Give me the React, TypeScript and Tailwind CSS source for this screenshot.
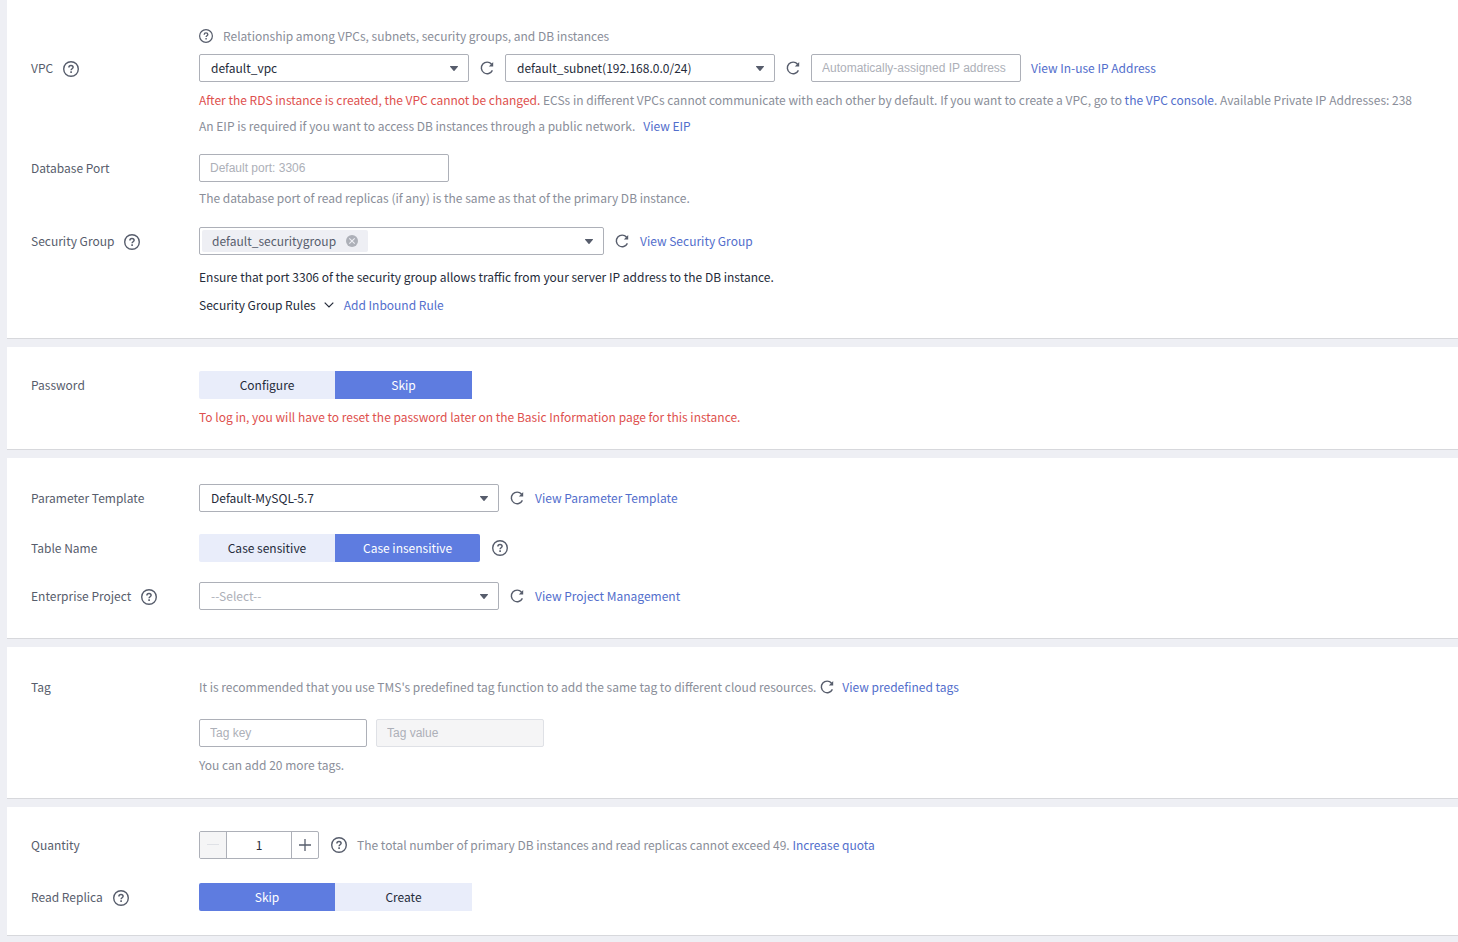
import React, { useState } from "react";
import clsx from "clsx";

const linkClass = "text-[#526ecc] hover:underline";
const hintClass = "leading-5 text-[#8a8e99]";
const inputClass =
  "h-7 rounded-xs border border-[#adb0b8] bg-white px-2.5 font-['Liberation_Sans',sans-serif] outline-none placeholder:text-[#adb0b8] focus:border-[#5e7ce0]";

const HelpIcon = ({ size = 16 }: { size?: number }) => (
  <svg
    width={size}
    height={size}
    viewBox="0 0 16 16"
    fill="none"
    stroke="#575d6c"
    className="shrink-0"
    aria-hidden="true"
  >
    <circle cx="8" cy="8" r="7.3" strokeWidth="1.4" />
    <path
      d="M5.9 6.5c0-1.3 1-2 2.1-2s2.1.7 2.1 1.8c0 1.4-2 1.5-2 2.9"
      strokeWidth="1.5"
    />
    <path d="M8.1 10.3v1.6" strokeWidth="1.6" />
  </svg>
);

const CaretIcon = () => (
  <svg width="8" height="5" viewBox="0 0 8 5" fill="#575d6c" aria-hidden="true">
    <path d="M0.4 0h7.2a.4.4 0 0 1 .3.7L4.5 4.7a.7.7 0 0 1-1 0L.1.7A.4.4 0 0 1 .4 0z" />
  </svg>
);

const RefreshButton = ({ label }: { label: string }) => (
  <button type="button" aria-label={label} className="shrink-0 cursor-pointer">
    <svg width="14" height="14" viewBox="0 0 14 14" fill="none">
      <path
        d="M12.4 9.4A5.8 5.8 0 1 1 11.6 3.2"
        stroke="#575d6c"
        strokeWidth="1.4"
      />
      <path d="M13.2 1v4.4H8.8z" fill="#575d6c" />
    </svg>
  </button>
);

interface SelectProps {
  id: string;
  label?: string;
  options: string[];
  className: string;
  muted?: boolean;
}

const Select: React.FC<SelectProps> = ({
  id,
  label,
  options,
  className,
  muted,
}) => (
  <div className={clsx("relative", className)}>
    <select
      id={id}
      aria-label={label}
      className={clsx(
        "h-7 w-full appearance-none rounded-xs border border-[#adb0b8] bg-white pr-7 pl-[11px] outline-none focus:border-[#5e7ce0]",
        muted ? "text-[#adb0b8]" : "text-[#252b3a]"
      )}
    >
      {options.map((option) => (
        <option key={option}>{option}</option>
      ))}
    </select>
    <span className="pointer-events-none absolute inset-y-0 right-[11px] flex items-center">
      <CaretIcon />
    </span>
  </div>
);

interface ToggleProps {
  label: string;
  options: string[];
  initial: string;
}

const Toggle: React.FC<ToggleProps> = ({ label, options, initial }) => {
  const [selected, setSelected] = useState(initial);

  return (
    <div
      role="group"
      aria-label={label}
      className="flex overflow-hidden rounded-xs"
    >
      {options.map((option) => (
        <button
          key={option}
          type="button"
          aria-pressed={option === selected}
          onClick={() => setSelected(option)}
          className={clsx(
            "h-7 min-w-34 cursor-pointer px-7 last:min-w-[137px]",
            option === selected
              ? "bg-[#5e7ce0] text-white"
              : "bg-[#e9edfa] text-[#252b3a]"
          )}
        >
          {option}
        </button>
      ))}
    </div>
  );
};

interface RowProps {
  label: string;
  htmlFor?: string;
  help?: boolean;
  className?: string;
  labelClassName?: string;
  children: React.ReactNode;
}

const Row: React.FC<RowProps> = ({
  label,
  htmlFor,
  help,
  className,
  labelClassName,
  children,
}) => (
  <div className={clsx("flex", className)}>
    <div
      className={clsx(
        "flex w-42 shrink-0 items-start gap-2.5 leading-7 text-[#575d6c]",
        labelClassName
      )}
    >
      {htmlFor ? <label htmlFor={htmlFor}>{label}</label> : <span>{label}</span>}
      {help && (
        <span className="flex h-7 items-center pt-0.5">
          <HelpIcon />
        </span>
      )}
    </div>
    <div className="min-w-0 flex-1">{children}</div>
  </div>
);

const Section = ({
  className,
  children,
}: {
  className: string;
  children: React.ReactNode;
}) => (
  <section
    className={clsx("border-b border-[#d7d8dc] bg-white px-6", className)}
  >
    {children}
  </section>
);

const QuantityStepper = () => {
  const [quantity, setQuantity] = useState(1);

  return (
    <div className="flex h-7 w-30 overflow-hidden rounded-xs border border-[#adb0b8]">
      <button
        type="button"
        aria-label="Decrease quantity"
        disabled={quantity <= 1}
        onClick={() => setQuantity(quantity - 1)}
        className="flex w-[27px] items-center justify-center border-r border-[#adb0b8] bg-white text-[#575d6c] disabled:bg-[#f5f5f6] disabled:text-[#dfe1e6]"
      >
        <svg width="12" height="12" viewBox="0 0 12 12" stroke="currentColor">
          <path d="M0 5.5h12" />
        </svg>
      </button>
      <input
        id="quantity"
        value={quantity}
        onChange={(e) => setQuantity(Number(e.target.value) || 1)}
        className="min-w-0 flex-1 text-center text-[#252b3a] outline-none"
      />
      <button
        type="button"
        aria-label="Increase quantity"
        onClick={() => setQuantity(quantity + 1)}
        className="flex w-[27px] cursor-pointer items-center justify-center border-l border-[#adb0b8] text-[#575d6c]"
      >
        <svg width="12" height="12" viewBox="0 0 12 12" stroke="currentColor">
          <path d="M0 6h12M6 0v12" strokeWidth="1.3" />
        </svg>
      </button>
    </div>
  );
};

const App: React.FC = () => {
  return (
    <main className="flex min-h-screen flex-col gap-2 bg-[#eeeff4] pl-[7px] font-['Noto_Sans_CJK_SC',sans-serif] text-xs">
      <Section className="pt-[26px] pb-[23px]">
        <Row label="VPC" htmlFor="vpc" help labelClassName="pt-7">
          <p className={clsx("mb-2 flex items-center gap-2.5", hintClass)}>
            <HelpIcon size={14} />
            Relationship among VPCs, subnets, security groups, and DB instances
          </p>
          <div className="flex items-center">
            <Select
              id="vpc"
              options={["default_vpc"]}
              className="mr-[11px] w-[270px]"
            />
            <RefreshButton label="Refresh VPCs" />
            <Select
              id="subnet"
              label="Subnet"
              options={["default_subnet(192.168.0.0/24)"]}
              className="mx-[11px] w-[270px]"
            />
            <RefreshButton label="Refresh subnets" />
            <input
              aria-label="IP address"
              placeholder="Automatically-assigned IP address"
              className={clsx("mr-2.5 ml-[11px] w-[210px]", inputClass)}
            />
            <a href="#in-use-ip" className={linkClass}>
              View In-use IP Address
            </a>
          </div>
          <p className={clsx("mt-2", hintClass)}>
            <span className="text-[#de504e]">
              After the RDS instance is created, the VPC cannot be changed.
            </span>{" "}
            ECSs in different VPCs cannot communicate with each other by default.
            If you want to create a VPC, go to{" "}
            <a href="#vpc-console" className={linkClass}>
              the VPC console
            </a>
            . Available Private IP Addresses: 238
          </p>
          <p className={clsx("mt-1.5", hintClass)}>
            An EIP is required if you want to access DB instances through a
            public network.
            <a href="#eip" className={clsx("ml-2", linkClass)}>
              View EIP
            </a>
          </p>
        </Row>

        <Row label="Database Port" htmlFor="port" className="mt-[18px]">
          <input
            id="port"
            placeholder="Default port: 3306"
            className={clsx("block w-[250px]", inputClass)}
          />
          <p className={clsx("mt-1.5", hintClass)}>
            The database port of read replicas (if any) is the same as that of
            the primary DB instance.
          </p>
        </Row>

        <Row label="Security Group" help className="mt-[19px]">
          <div className="flex items-center">
            <div className="mr-[11px] flex h-7 w-[405px] items-center rounded-xs border border-[#adb0b8] pl-0.5">
              <span className="flex h-[22px] items-center gap-2.5 rounded-xs bg-[#eeeff4] px-2.5 text-[#575d6c]">
                default_securitygroup
                <button
                  type="button"
                  aria-label="Remove default_securitygroup"
                  className="cursor-pointer"
                >
                  <svg width="12" height="12" viewBox="0 0 12 12">
                    <circle cx="6" cy="6" r="6" fill="#adb0b8" />
                    <path
                      d="M3.3 3.3l5.4 5.4M8.7 3.3L3.3 8.7"
                      stroke="#eeeff4"
                      strokeWidth="1.1"
                    />
                  </svg>
                </button>
              </span>
              <button
                type="button"
                aria-label="Choose security groups"
                className="flex h-full flex-1 cursor-pointer items-center justify-end pr-2.5"
              >
                <CaretIcon />
              </button>
            </div>
            <RefreshButton label="Refresh security groups" />
            <a href="#security-group" className={clsx("ml-[11px]", linkClass)}>
              View Security Group
            </a>
          </div>
          <p className="mt-3 leading-5 text-[#252b3a]">
            Ensure that port 3306 of the security group allows traffic from your
            server IP address to the DB instance.
          </p>
          <div className="mt-2 flex items-center gap-2.5 leading-5">
            <button
              type="button"
              className="flex cursor-pointer items-center gap-2 text-[#252b3a]"
            >
              Security Group Rules
              <svg
                width="10"
                height="6"
                viewBox="0 0 10 6"
                fill="none"
                stroke="#252b3a"
                strokeWidth="1.2"
              >
                <path d="M0.7 0.7L5 5L9.3 0.7" />
              </svg>
            </button>
            <a href="#inbound-rule" className={linkClass}>
              Add Inbound Rule
            </a>
          </div>
        </Row>
      </Section>

      <Section className="pt-6 pb-[22px]">
        <Row label="Password">
          <Toggle label="Password" options={["Configure", "Skip"]} initial="Skip" />
          <p className="mt-2 leading-5 text-[#de504e]">
            To log in, you will have to reset the password later on the Basic
            Information page for this instance.
          </p>
        </Row>
      </Section>

      <Section className="pt-[26px] pb-7">
        <Row label="Parameter Template" htmlFor="template">
          <div className="flex items-center">
            <Select
              id="template"
              options={["Default-MySQL-5.7"]}
              className="mr-[11px] w-[300px]"
            />
            <RefreshButton label="Refresh parameter templates" />
            <a
              href="#parameter-template"
              className={clsx("ml-[11px]", linkClass)}
            >
              View Parameter Template
            </a>
          </div>
        </Row>
        <Row label="Table Name" className="mt-[22px]">
          <div className="flex items-center gap-3">
            <Toggle
              label="Table Name"
              options={["Case sensitive", "Case insensitive"]}
              initial="Case insensitive"
            />
            <HelpIcon />
          </div>
        </Row>
        <Row label="Enterprise Project" htmlFor="project" help className="mt-5">
          <div className="flex items-center">
            <Select
              id="project"
              options={["--Select--"]}
              className="mr-[11px] w-[300px]"
              muted
            />
            <RefreshButton label="Refresh enterprise projects" />
            <a
              href="#project-management"
              className={clsx("ml-[11px]", linkClass)}
            >
              View Project Management
            </a>
          </div>
        </Row>
      </Section>

      <Section className="pt-[26px] pb-[23px]">
        <Row label="Tag">
          <div className="flex h-7 items-center">
            <p className={clsx("mr-1", hintClass)}>
              It is recommended that you use TMS's predefined tag function to add
              the same tag to different cloud resources.
            </p>
            <RefreshButton label="Refresh tags" />
            <a href="#predefined-tags" className={clsx("ml-2", linkClass)}>
              View predefined tags
            </a>
          </div>
          <div className="mt-[18px] flex gap-[9px]">
            <input
              aria-label="Tag key"
              placeholder="Tag key"
              className={clsx("w-42", inputClass)}
            />
            <input
              aria-label="Tag value"
              placeholder="Tag value"
              disabled
              className="h-7 w-42 rounded-xs border border-[#dfe1e6] bg-[#f5f5f6] px-2.5 font-['Liberation_Sans',sans-serif] placeholder:text-[#adb0b8]"
            />
          </div>
          <p className={clsx("mt-2", hintClass)}>You can add 20 more tags.</p>
        </Row>
      </Section>

      <Section className="py-6">
        <Row label="Quantity" htmlFor="quantity">
          <div className="flex items-center">
            <QuantityStepper />
            <span className="mr-2.5 ml-3">
              <HelpIcon />
            </span>
            <p className={hintClass}>
              The total number of primary DB instances and read replicas cannot
              exceed 49.{" "}
              <a href="#quota" className={linkClass}>
                Increase quota
              </a>
            </p>
          </div>
        </Row>
        <Row label="Read Replica" help className="mt-6">
          <Toggle label="Read Replica" options={["Skip", "Create"]} initial="Skip" />
        </Row>
      </Section>
    </main>
  );
};

export default App;
